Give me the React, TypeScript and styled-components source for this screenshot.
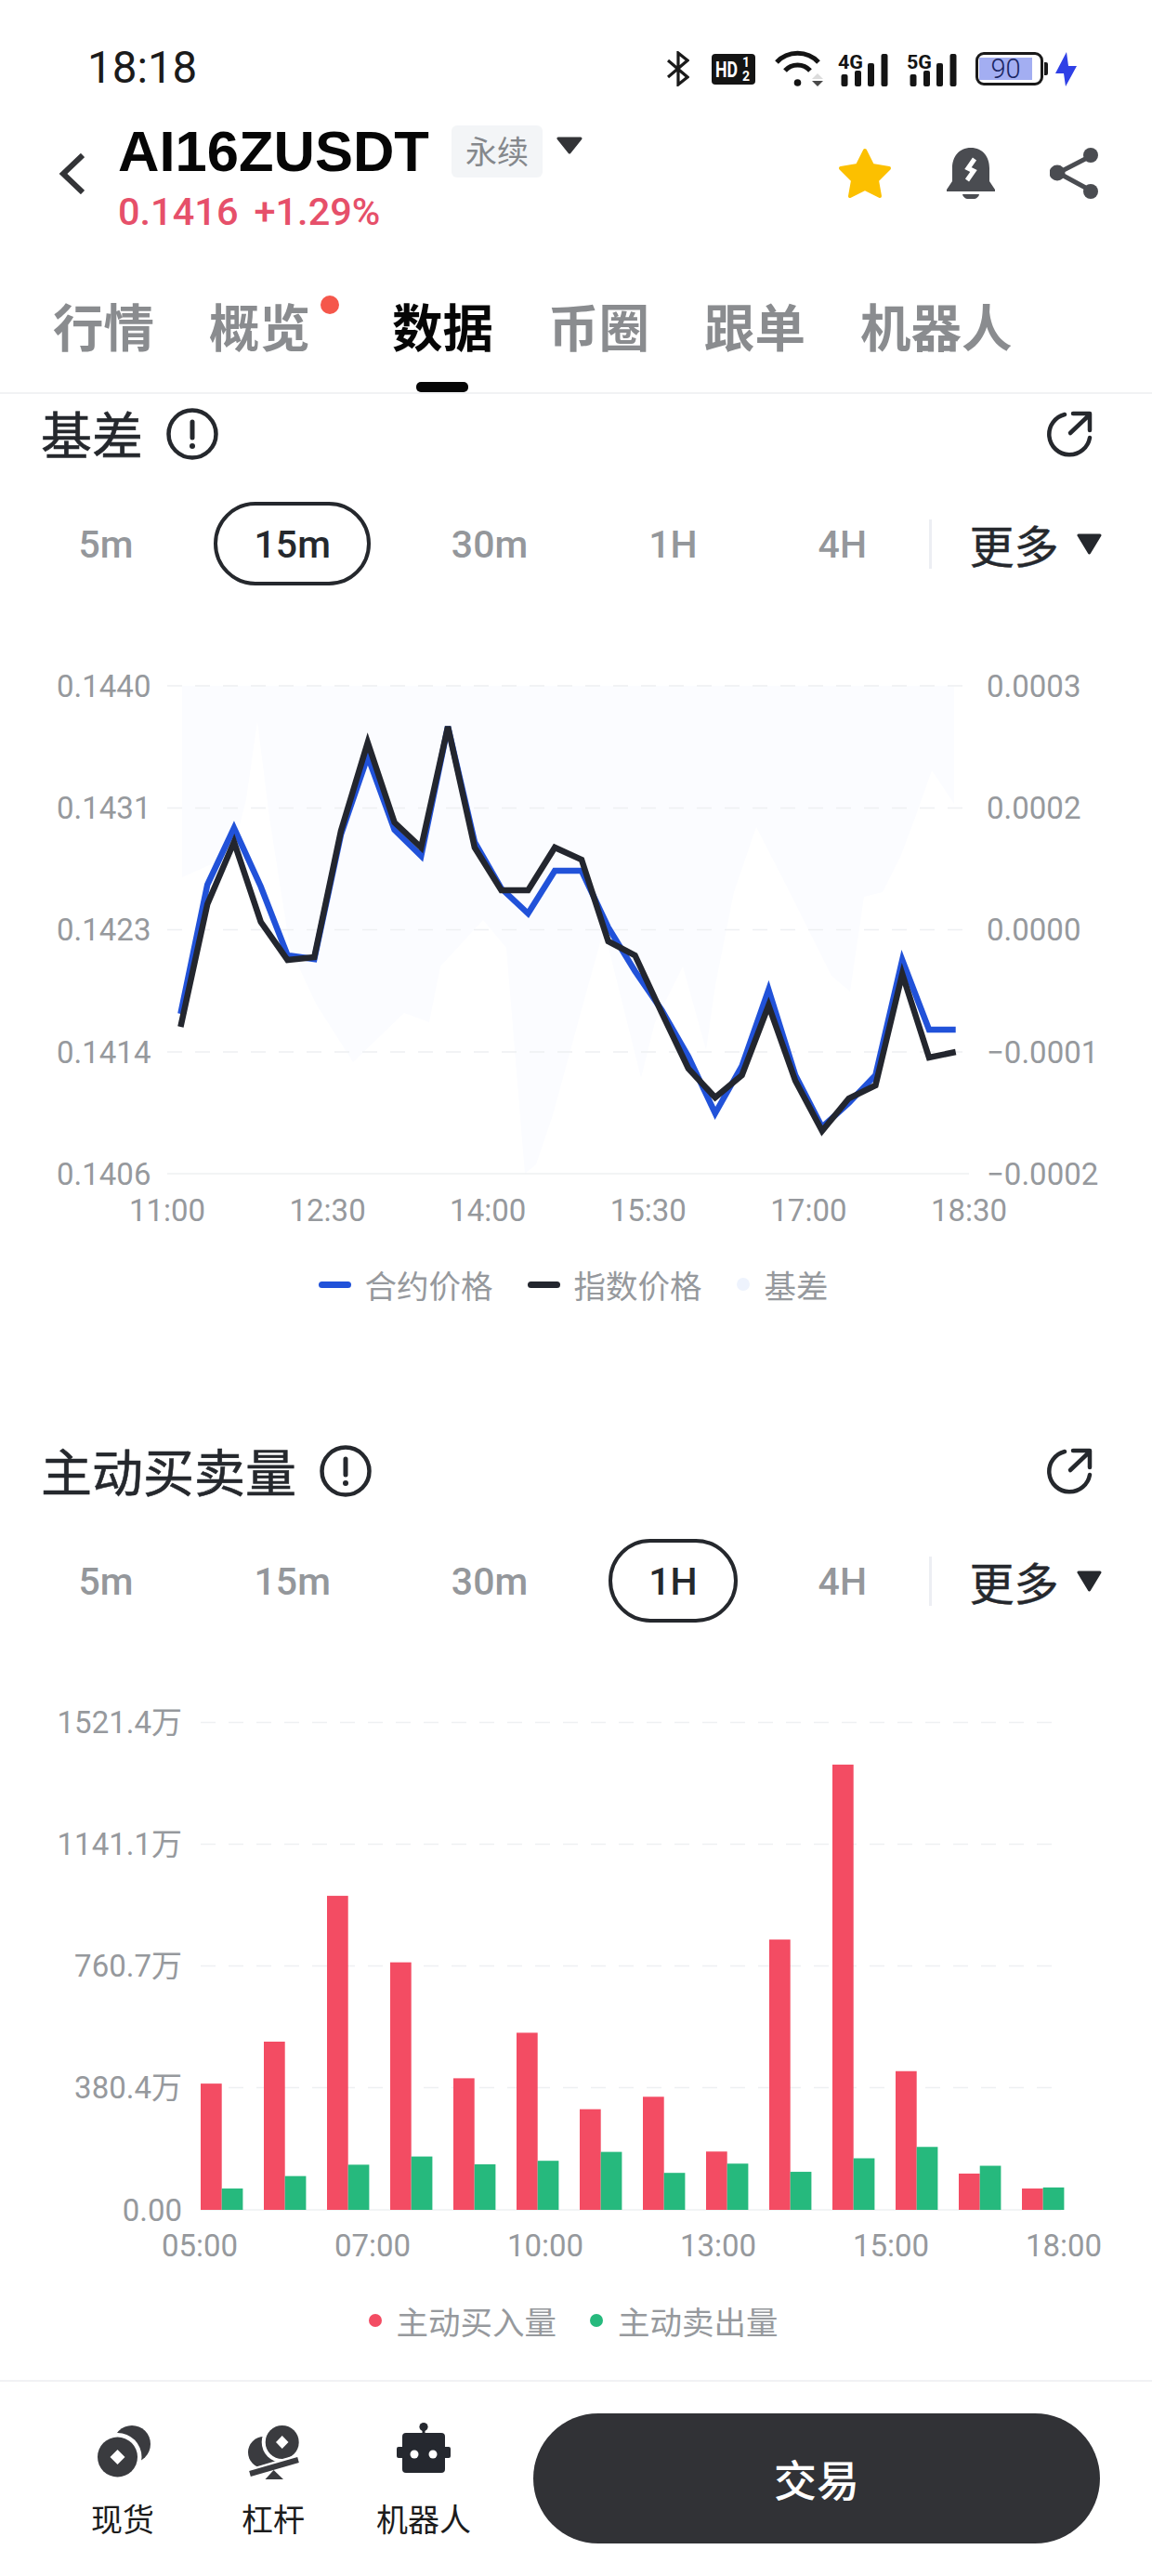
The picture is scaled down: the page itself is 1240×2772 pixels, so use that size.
import React from 'react';
import styled, { createGlobalStyle } from 'styled-components';

const CJK = '"Noto Sans CJK SC", "Noto Sans", sans-serif';

const Global = createGlobalStyle`
  html, body { margin: 0; padding: 0; background: #fff; }
  body { font-family: Roboto, ${CJK}; }
  * { box-sizing: border-box; }
`;

const Page = styled.div`
  width: 1240px;
  height: 2772px;
  overflow: hidden;
  background: #fff;
`;

/* status bar */
const StatusBar = styled.div`
  height: 130px;
  padding: 18px 81px 0 94px;
  display: flex;
  align-items: center;
`;
const Clock = styled.div`
  font: 400 47.5px/1 Roboto, sans-serif;
  color: #1b1b1b;
  margin-right: auto;
`;
const StatusIcon = styled.svg<{ $ml?: number }>`
  display: block;
  flex: none;
  margin-left: ${p => p.$ml ?? 0}px;
`;
const IconLabel = styled.text`
  font-family: Roboto, sans-serif;
  font-weight: 700;
`;
const Battery = styled.div`
  position: relative;
  width: 73px;
  height: 36px;
  margin-left: 20px;
  padding: 3px 9px 3px 1px;
  border: 3px solid #1a1a1a;
  border-radius: 9px;
  display: flex;
  flex: none;
  &::after {
    content: '';
    position: absolute;
    right: -8px;
    top: 8px;
    width: 4px;
    height: 14px;
    background: #1a1a1a;
    border-radius: 0 2px 2px 0;
  }
`;
const BatteryFill = styled.div`
  flex: 1;
  background: #a3aef2;
  color: #1b2663;
  font: 300 29px/24px Roboto, sans-serif;
  text-align: center;
`;

/* header */
const Header = styled.div`
  height: 130px;
  padding: 5px 58px 0 63px;
  display: flex;
  align-items: flex-start;
`;
const BackIcon = styled.svg`
  display: block;
  flex: none;
  margin: 30px 36px 0 0;
`;
const Ticker = styled.div`
  display: flex;
  flex-direction: column;
`;
const TickerTop = styled.div`
  display: flex;
  align-items: center;
  height: 56px;
`;
const Symbol = styled.div`
  font: 700 61.5px/56px "Liberation Sans", Arial, sans-serif;
  color: #060606;
`;
const Tag = styled.div`
  width: 98px;
  height: 56px;
  margin-left: 24px;
  border-radius: 6px;
  background: #f3f5f7;
  color: #85888c;
  font: 400 34px/54px ${CJK};
  text-align: center;
`;
const TagCaret = styled.div`
  margin: -14px 0 0 15px;
`;
const PriceRow = styled.div`
  display: flex;
  gap: 17px;
  margin-top: 19px;
  font: 500 41.5px/36px Roboto, sans-serif;
  color: #e6506a;
`;
const HeaderActions = styled.div`
  margin-left: auto;
  margin-top: 24px;
  display: flex;
  gap: 59px;
`;
const ActionIcon = styled.svg`
  display: block;
`;

/* tabs */
const Tabs = styled.div`
  height: 164px;
  padding: 55px 0 0 57px;
  display: flex;
  gap: 59px;
  border-bottom: 2px solid #f1f2f4;
`;
const Tab = styled.div<{ $active?: boolean; $dot?: boolean }>`
  position: relative;
  height: 70px;
  font: 700 54.5px/70px ${CJK};
  color: ${p => (p.$active ? '#060606' : '#8a8c8f')};
  ${p => p.$active && `
    &::after {
      content: '';
      position: absolute;
      left: 26px;
      top: 96px;
      width: 56px;
      height: 11px;
      border-radius: 5px;
      background: #060606;
    }
  `}
  ${p => p.$dot && `
    margin-right: 29px;
    &::before {
      content: '';
      position: absolute;
      right: -31px;
      top: 3px;
      width: 20px;
      height: 20px;
      border-radius: 50%;
      background: #f5574b;
    }
  `}
`;

/* section */
const Section = styled.section<{ $pad: number }>`
  padding-bottom: ${p => p.$pad}px;
`;
const TitleRow = styled.div`
  height: 86px;
  padding: 0 63px 0 44px;
  display: flex;
  align-items: center;
  gap: 25px;
`;
const Title = styled.h2`
  margin: 0 0 4px;
  font: 400 55px/82px ${CJK};
  color: #25282d;
  -webkit-text-stroke: 0.6px #25282d;
`;
const LinkIcon = styled.svg`
  display: block;
  margin-left: auto;
`;
const RangeRow = styled.div`
  height: 150px;
  padding-left: 41px;
  display: flex;
  align-items: center;
  gap: 43px;
`;
const RangeTab = styled.div<{ $active?: boolean }>`
  height: 90px;
  padding: 0 39.5px;
  border: 4px solid ${p => (p.$active ? '#25282d' : 'transparent')};
  border-radius: 45px;
  font: 500 41px/84px Roboto, sans-serif;
  color: ${p => (p.$active ? '#25282d' : '#94979b')};
`;
const RangeDivider = styled.div`
  width: 3px;
  height: 53px;
  margin-left: -20px;
  background: #eceef3;
`;
const MoreButton = styled.div`
  display: flex;
  align-items: center;
  gap: 19px;
  margin-left: -2px;
  font: 400 48px/60px ${CJK};
  color: #25282d;
  -webkit-text-stroke: 0.4px #25282d;
`;
const ChartSvg = styled.svg`
  display: block;
`;
const AxisText = styled.text`
  font-family: Roboto, ${CJK};
  font-size: 33px;
  fill: #96999d;
  dominant-baseline: central;
`;
const Legend = styled.div`
  height: 104px;
  display: flex;
  align-items: center;
  justify-content: center;
  font: 400 34.5px/44px ${CJK};
  color: #96999d;
`;
const LegendItem = styled.div<{ $ml: number }>`
  display: flex;
  align-items: center;
  margin-left: ${p => p.$ml}px;
`;
const LegendLine = styled.i<{ $color: string }>`
  display: block;
  width: 35px;
  height: 7px;
  margin-right: 15px;
  border-radius: 4px;
  background: ${p => p.$color};
`;
const LegendDot = styled.i<{ $color: string }>`
  display: block;
  width: 14px;
  height: 14px;
  margin-right: 16px;
  border-radius: 50%;
  background: ${p => p.$color};
`;

/* footer */
const Footer = styled.footer`
  height: 211px;
  padding: 34px 0 0 67px;
  display: flex;
  align-items: flex-start;
  gap: 32px;
  border-top: 2px solid #f1f2f4;
`;
const NavItem = styled.div`
  width: 130px;
  padding-top: 9px;
  display: flex;
  flex-direction: column;
  align-items: center;
  gap: 20px;
  font: 400 34px/44px ${CJK};
  color: #1c1c1c;
`;
const NavIcon = styled.svg`
  display: block;
`;
const TradeButton = styled.div`
  width: 610px;
  height: 140px;
  margin-left: 21px;
  border-radius: 70px;
  background: #313236;
  color: #fff;
  font: 500 46px/138px ${CJK};
  text-align: center;
`;

/* data */
const px = (i: number) => 194.4 + 28.77 * i;
const black = [1105, 973, 906, 992, 1033, 1030, 894, 799, 885, 912, 782, 912, 958, 958, 912, 925, 1013, 1028, 1090, 1150, 1181, 1157, 1082, 1163, 1217, 1182, 1168, 1048, 1138, 1132];
const blue = [1091, 952, 891, 954, 1028, 1032, 898, 814, 893, 921, 782, 906, 956, 983, 937, 937, 998, 1045, 1087, 1137, 1198, 1147, 1065, 1157, 1213, 1187, 1157, 1033, 1108, 1108];
const toPts = (a: number[]) => a.map((y, i) => `${px(i).toFixed(1)},${y}`).join(' ');
const band = '196,738 1027,738 1027,865 1003,829 985,880 970,920 950,960 930,965 915,1067 895,1050 850,960 814,890 790,960 770,1060 760,1130 735,1040 705,1100 690,1160 675,1100 650,1000 625,1090 595,1200 577,1253 565,1263 545,1020 520,990 474,1040 462,1100 435,1090 380,1143 340,1080 312,1020 290,880 277,776 265,860 250,920 196,944';

const lineLeft = ['0.1440', '0.1431', '0.1423', '0.1414', '0.1406'];
const lineRight = ['0.0003', '0.0002', '0.0000', '−0.0001', '−0.0002'];
const lineY = [738, 869.5, 1000.5, 1132, 1263];
const lineX = ['11:00', '12:30', '14:00', '15:30', '17:00', '18:30'];

const barLabels = ['1521.4万', '1141.1万', '760.7万', '380.4万', '0.00'];
const barY = [1853.5, 1984.5, 2115.5, 2246.5, 2378];
const barX = ['05:00', '07:00', '10:00', '13:00', '15:00', '18:00'];
const reds = [1155, 1037, 627, 814, 1140, 1012, 1227, 1192, 1346, 750, 258, 1120, 1408, 1450];
const greens = [1450, 1415, 1383, 1360, 1382, 1372, 1347, 1406, 1380, 1403, 1365, 1333, 1386, 1447];
const h = (v: number) => (1510 - v) / 2.613;

const Info = () => (
  <svg width="56" height="56" viewBox="0 0 56 56" fill="none" stroke="#25282d" strokeWidth="4.5" strokeLinecap="round">
    <circle cx="28" cy="28" r="25.5" />
    <path d="M28 15v17" strokeWidth="5" />
    <circle cx="28" cy="41" r="3" fill="#25282d" stroke="none" />
  </svg>
);
const Link = () => (
  <LinkIcon width="50" height="50" viewBox="0 0 50 50" fill="none" stroke="#25282d" strokeWidth="4.5" strokeLinecap="round" strokeLinejoin="round">
    <path d="M19 4A22 22 0 1 0 46 29" />
    <path d="M25 24L45 5M28 3h18v18" />
  </LinkIcon>
);
const Caret = ({ w, hh, c }: { w: number; hh: number; c: string }) => (
  <svg width={w} height={hh} viewBox={`0 0 ${w} ${hh}`} style={{ display: 'block' }}>
    <polygon points={`2,2 ${w - 2},2 ${w / 2},${hh - 2}`} fill={c} stroke={c} strokeWidth="3" strokeLinejoin="round" />
  </svg>
);
const Range = ({ active }: { active: string }) => (
  <RangeRow>
    {['5m', '15m', '30m', '1H', '4H'].map(t => (
      <RangeTab key={t} $active={t === active}>{t}</RangeTab>
    ))}
    <RangeDivider />
    <MoreButton>更多<Caret w={27} hh={23} c="#25282d" /></MoreButton>
  </RangeRow>
);

export default function App() {
  return (
    <Page>
      <Global />
      <StatusBar>
        <Clock>18:18</Clock>
        <StatusIcon width="24" height="38" viewBox="0 0 24 38" fill="none" stroke="#1a1a1a" strokeWidth="3.2">
          <path d="M1 10L22 28L12 36V2L22 10L1 28" />
        </StatusIcon>
        <StatusIcon $ml={24} width="47" height="33" viewBox="0 0 47 33">
          <rect width="47" height="33" rx="4" fill="#141414" />
          <IconLabel x="4" y="25" fontSize="23" fill="#fff" textLength="24" lengthAdjust="spacingAndGlyphs">HD</IconLabel>
          <IconLabel x="33" y="14" fontSize="14" fill="#fff">1</IconLabel>
          <IconLabel x="33" y="29" fontSize="14" fill="#fff">2</IconLabel>
        </StatusIcon>
        <StatusIcon $ml={21} width="52" height="40" viewBox="0 0 52 40" fill="none" stroke="#141414" strokeWidth="5">
          <path d="M2 13C14 0 35 0 47 13" />
          <path d="M11 22C18 14 31 14 38 22" />
          <circle cx="24.5" cy="35" r="3.8" fill="#141414" stroke="none" />
          <path d="M46 25l-6 6h12z" fill="#dcdcdc" stroke="none" />
          <path d="M40 33h12l-6 6z" fill="#4a4a4a" stroke="none" />
        </StatusIcon>
        {['4G', '5G'].map((t, k) => (
          <StatusIcon key={t} $ml={k ? 20 : 16} width="54" height="38" viewBox="0 0 54 38">
            <IconLabel x="0" y="19" fontSize="21" fill="#141414" textLength="27" lengthAdjust="spacingAndGlyphs">{t}</IconLabel>
            <rect x="3.5" y="25" width="7" height="13" rx="2" fill="#141414" />
            <rect x="18" y="21" width="7" height="17" rx="2" fill="#141414" />
            <rect x="32" y="13" width="7" height="25" rx="2" fill="#141414" />
            <rect x="46.5" y="3" width="7" height="35" rx="2" fill="#141414" />
          </StatusIcon>
        ))}
        <Battery><BatteryFill>90</BatteryFill></Battery>
        <StatusIcon $ml={13} width="23" height="37" viewBox="0 0 23 37">
          <polygon points="12,0 0,23 9,23 11,37 23,15 14,15" fill="#2f40e6" />
        </StatusIcon>
      </StatusBar>

      <Header>
        <BackIcon width="28" height="44" viewBox="0 0 28 44" fill="none" stroke="#333437" strokeWidth="6">
          <path d="M26 2L5 22L26 42" />
        </BackIcon>
        <Ticker>
          <TickerTop>
            <Symbol>AI16ZUSDT</Symbol>
            <Tag>永续</Tag>
            <TagCaret><Caret w={28} hh={19} c="#333437" /></TagCaret>
          </TickerTop>
          <PriceRow><span>0.1416</span><span>+1.29%</span></PriceRow>
        </Ticker>
        <HeaderActions>
          <ActionIcon width="58" height="55" viewBox="0 0 58 55">
            <polygon points="29,3 37,19 55,22 42,35 45,52 29,44 13,52 16,35 3,22 21,19" fill="#fcc000" stroke="#fcc000" strokeWidth="4" strokeLinejoin="round" />
          </ActionIcon>
          <ActionIcon width="52" height="55" viewBox="0 0 52 55">
            <path d="M26 0C13 0 6 10 6 22v14L0 45v2h52v-2l-6-9V22C46 10 39 0 26 0z" fill="#4a4c51" />
            <path d="M17 50h18a9 5.5 0 0 1-18 0z" fill="#4a4c51" />
            <path d="M30 12L23 22L29 25L22 35" fill="none" stroke="#fff" strokeWidth="5" />
          </ActionIcon>
          <ActionIcon width="52" height="55" viewBox="0 0 52 55" fill="#4a4c51" stroke="#4a4c51">
            <path d="M44 9L9 27L44 46" fill="none" strokeWidth="5" />
            <circle cx="44" cy="8" r="8" stroke="none" />
            <circle cx="8" cy="27" r="8.5" stroke="none" />
            <circle cx="44" cy="47" r="8" stroke="none" />
          </ActionIcon>
        </HeaderActions>
      </Header>

      <Tabs>
        <Tab>行情</Tab>
        <Tab $dot>概览</Tab>
        <Tab $active>数据</Tab>
        <Tab>币圈</Tab>
        <Tab>跟单</Tab>
        <Tab>机器人</Tab>
      </Tabs>

      <Section $pad={106}>
        <TitleRow>
          <Title>基差</Title>
          <Info />
          <Link />
        </TitleRow>
        <Range active="15m" />
        <ChartSvg width="1240" height="670" viewBox="0 660 1240 670">
          <polygon points={band} fill="#fbfcff" />
          {lineY.map((y, i) => (
            <line key={y} x1="180" x2="1043" y1={y} y2={y} stroke="#eef0f2" strokeWidth="1.5" strokeDasharray={i === 4 ? undefined : '16 14'} />
          ))}
          {lineLeft.map((t, i) => <AxisText key={t} x="61" y={lineY[i]}>{t}</AxisText>)}
          {lineRight.map((t, i) => <AxisText key={t} x="1062" y={lineY[i]}>{t}</AxisText>)}
          {lineX.map((t, i) => <AxisText key={t} x={180 + 172.6 * i} y="1302" textAnchor="middle">{t}</AxisText>)}
          <polyline points={toPts(blue)} fill="none" stroke="#2152d9" strokeWidth="6.5" strokeLinejoin="miter" />
          <polyline points={toPts(black)} fill="none" stroke="#23262e" strokeWidth="6.5" strokeLinejoin="miter" />
        </ChartSvg>
        <Legend>
          <LegendItem $ml={-6}><LegendLine $color="#2152d9" />合约价格</LegendItem>
          <LegendItem $ml={37}><LegendLine $color="#23262e" />指数价格</LegendItem>
          <LegendItem $ml={37}><LegendDot $color="#eef3fd" />基差</LegendItem>
        </Legend>
      </Section>

      <Section $pad={12}>
        <TitleRow>
          <Title>主动买卖量</Title>
          <Info />
          <Link />
        </TitleRow>
        <Range active="1H" />
        <ChartSvg width="1240" height="669" viewBox="0 1776 1240 669">
          {barY.map((y, i) => (
            <line key={y} x1="216" x2="1142" y1={y} y2={y} stroke="#eef0f2" strokeWidth="1.5" strokeDasharray={i === 4 ? undefined : '16 14'} />
          ))}
          {barLabels.map((t, i) => <AxisText key={t} x="196" y={barY[i]} textAnchor="end">{t}</AxisText>)}
          {barX.map((t, i) => <AxisText key={t} x={215 + 186 * i} y="2416" textAnchor="middle">{t}</AxisText>)}
          {reds.map((v, i) => (
            <rect key={i} x={216 + 68 * i} y={2378 - h(v)} width="22.7" height={h(v)} fill="#f34c63" />
          ))}
          {greens.map((v, i) => (
            <rect key={i} x={238.7 + 68 * i} y={2378 - h(v)} width="22.7" height={h(v)} fill="#26b97d" />
          ))}
        </ChartSvg>
        <Legend>
          <LegendItem $ml={-6}><LegendDot $color="#f34c63" />主动买入量</LegendItem>
          <LegendItem $ml={36}><LegendDot $color="#26b97d" />主动卖出量</LegendItem>
        </Legend>
      </Section>

      <Footer>
        <NavItem>
          <NavIcon width="60" height="62" viewBox="0 0 60 62">
            <circle cx="40" cy="24" r="20" fill="#3a3b3f" />
            <circle cx="24.5" cy="38" r="26" fill="#fff" />
            <circle cx="24.5" cy="38" r="21.5" fill="#3a3b3f" />
            <polygon points="24.5,30 32.5,38 24.5,46 16.5,38" fill="#fff" />
          </NavIcon>
          现货
        </NavItem>
        <NavItem>
          <NavIcon width="60" height="62" viewBox="0 0 60 62">
            <circle cx="20" cy="33" r="17" fill="#3a3b3f" />
            <circle cx="39.7" cy="22" r="22" fill="#fff" />
            <circle cx="39.7" cy="22" r="18" fill="#3a3b3f" />
            <polygon points="39.7,15 46.5,22 39.7,29 33,22" fill="#fff" />
            <path d="M4 57L58 41" stroke="#fff" strokeWidth="12" />
            <path d="M5 56L57 41" stroke="#3a3b3f" strokeWidth="6" />
            <polygon points="30.6,52 21.5,62 41,62" fill="#3a3b3f" />
          </NavIcon>
          杠杆
        </NavItem>
        <NavItem>
          <NavIcon width="60" height="62" viewBox="0 0 60 62" fill="#25282f">
            <circle cx="30" cy="5.5" r="4.6" />
            <rect x="28.5" y="6" width="3" height="8" />
            <rect x="7" y="12" width="46" height="43" rx="4" />
            <rect x="1" y="27" width="8" height="12" rx="2" />
            <rect x="51" y="27" width="8" height="12" rx="2" />
            <circle cx="20" cy="35" r="4.5" fill="#fff" />
            <circle cx="40" cy="35" r="4.5" fill="#fff" />
          </NavIcon>
          机器人
        </NavItem>
        <TradeButton>交易</TradeButton>
      </Footer>
    </Page>
  );
}
